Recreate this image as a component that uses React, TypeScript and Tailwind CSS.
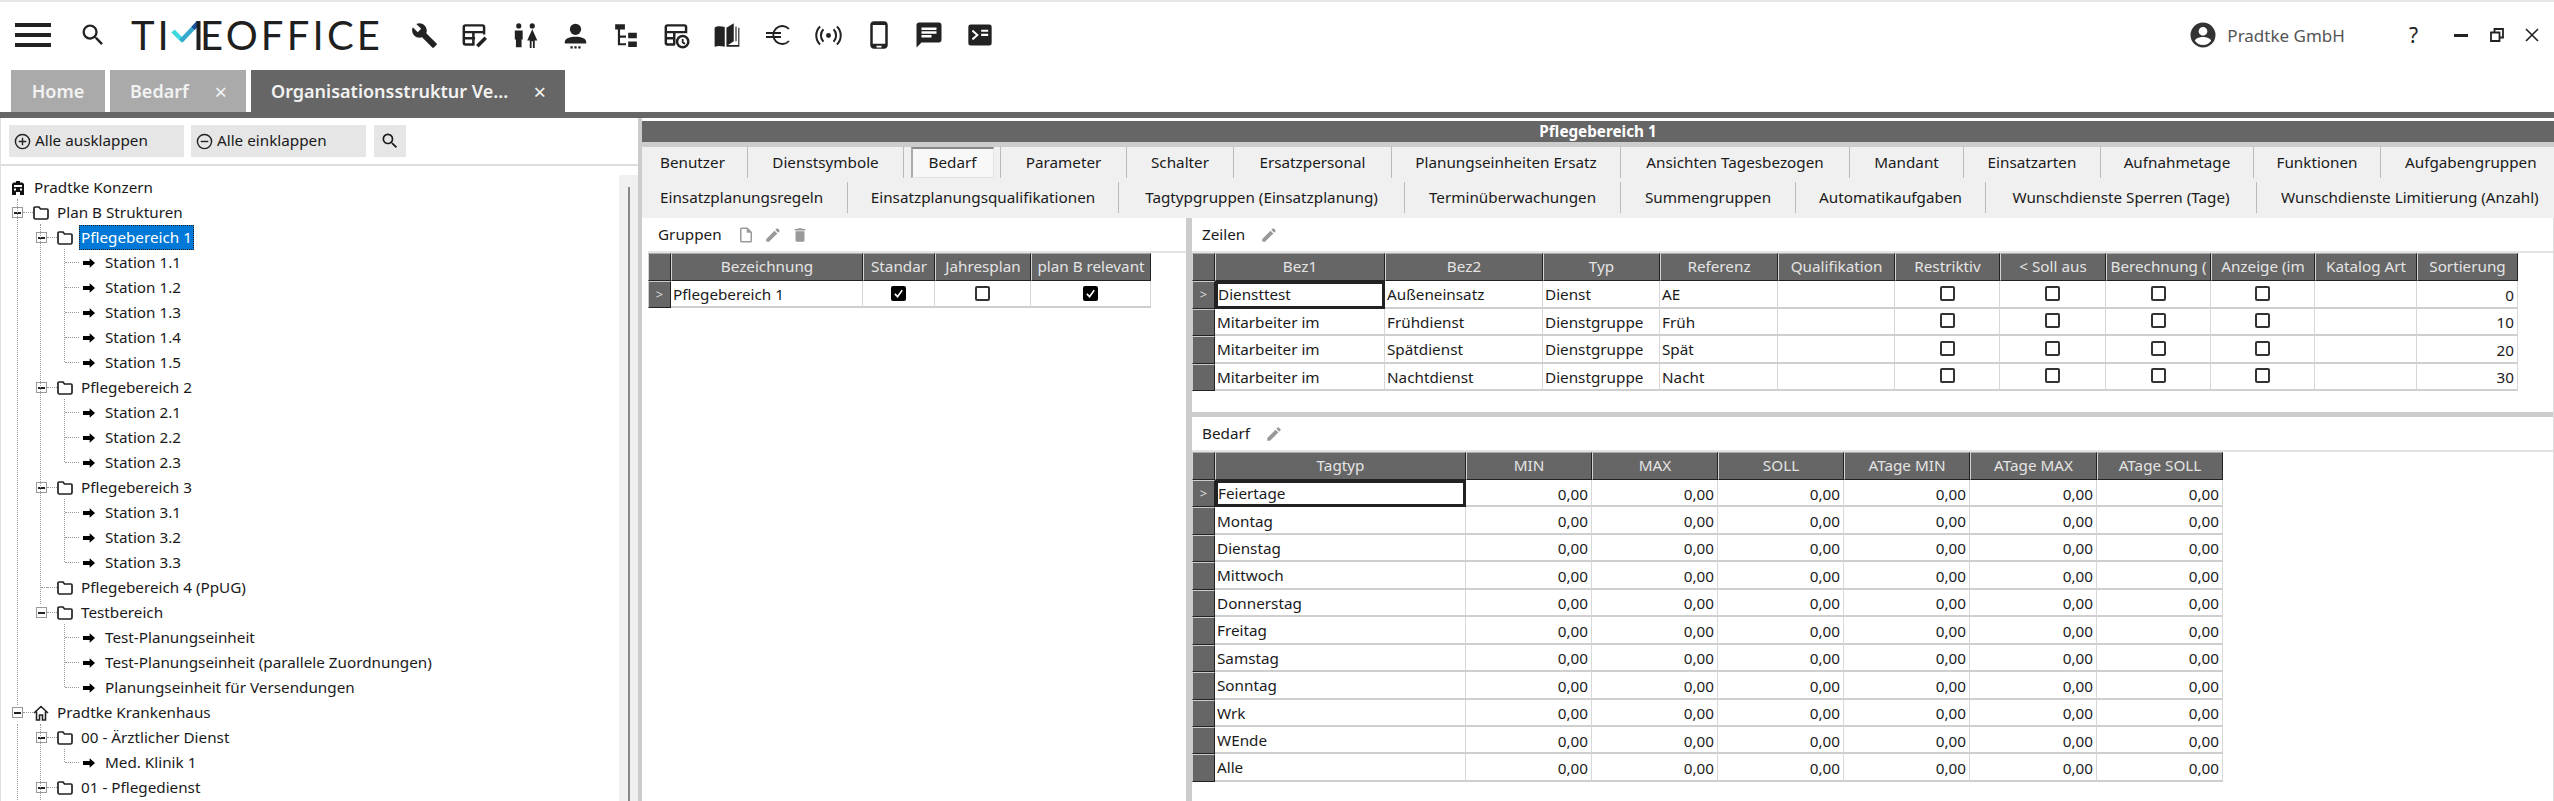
import React from 'react';

const font = "font-['Noto_Sans','Open_Sans',sans-serif]";

const Ic = ({ d, className = 'w-6 h-6', fill = 'currentColor' }: { d: string; className?: string; fill?: string }) => (
  <svg viewBox="0 0 24 24" className={className} fill={fill}>
    <path d={d} />
  </svg>
);

const P = {
  search: 'M15.5 14h-.79l-.28-.27A6.47 6.47 0 0 0 16 9.5 6.5 6.5 0 1 0 9.5 16c1.61 0 3.09-.59 4.23-1.57l.27.28v.79l5 4.99L20.49 19l-4.99-5zm-6 0C7.01 14 5 11.99 5 9.5S7.01 5 9.5 5 14 7.01 14 9.5 11.99 14 9.5 14z',
  wrench: 'M22.7 19l-9.1-9.1c.9-2.3.4-5-1.5-6.9-2-2-5-2.4-7.4-1.3L9 6 6 9 1.6 4.7C.4 7.1.9 10.1 2.9 12.1c1.9 1.9 4.6 2.4 6.9 1.5l9.1 9.1c.4.4 1 .4 1.4 0l2.3-2.3c.5-.4.5-1.1.1-1.4z',
  phone: 'M16 1H8C6.3 1 5 2.3 5 4v16c0 1.7 1.3 3 3 3h8c1.7 0 3-1.3 3-3V4c0-1.7-1.3-3-3-3zm1 18H7V4h10zM10 20.5h4V22h-4z',
  message: 'M20 2H4c-1.1 0-2 .9-2 2v18l4-4h14c1.1 0 2-.9 2-2V4c0-1.1-.9-2-2-2zM6 9h12v2H6zm8 5H6v-2h8zm4-6H6V6h12z',
  terminal: 'M20 3H4a2 2 0 0 0-2 2v14a2 2 0 0 0 2 2h16a2 2 0 0 0 2-2V5a2 2 0 0 0-2-2zM6 16.5 5 15l3.5-3L5 9l1-1.5 5 4.5zM13 11h6v1.800h-6zm0-3.500h6v1.800h-6z',
  book: 'M1 5c2-1.300 5-1.500 9-.500V22c-3.500-1-6.500-1-9 0zM11.500 5 18 1v16l-5 3.500h9V5h1v17H11.500zM19.500 4h1v13h-1z',
  avatar: 'M12 2a10 10 0 1 0 0 20 10 10 0 0 0 0-20zm0 3.500a3.500 3.500 0 1 1 0 7 3.500 3.500 0 0 1 0-7zM12 20a8 8 0 0 1-6.500-3.400C5.600 14.600 9.600 13.500 12 13.500s6.400 1.100 6.500 3.100A8 8 0 0 1 12 20z',
  newFile: 'M14 2H6a2 2 0 0 0-2 2v16a2 2 0 0 0 2 2h12a2 2 0 0 0 2-2V8zM18 20H6V4h7v5h5z',
  pencil: 'M3 17.250V21h3.750L17.810 9.940l-3.750-3.750zM20.710 7.040a1 1 0 0 0 0-1.410l-2.340-2.340a1 1 0 0 0-1.410 0l-1.830 1.830 3.750 3.750z',
  trash: 'M6 19a2 2 0 0 0 2 2h8a2 2 0 0 0 2-2V7H6zM19 4h-3.500l-1-1h-5l-1 1H5v2h14z',
  arrow: 'M13 5l8 7-8 7v-4H3V9h10z',
};

const Folder = () => (
  <svg viewBox="0 0 16 14" className="w-4 h-[14px] shrink-0 text-[#222]" fill="none" stroke="currentColor" strokeWidth="1.700">
    <path d="M1 3.500V11.500a1.500 1.500 0 0 0 1.500 1.500h11a1.500 1.500 0 0 0 1.500-1.500V4a1 1 0 0 0-1-1H7.500L6 1H2a1 1 0 0 0-1 1z" />
  </svg>
);

const Expander = () => (
  <span className="w-[11px] h-[11px] shrink-0 border border-[#999] bg-white flex items-center justify-center">
    <span className="w-[7px] h-[2px] bg-[#222]" />
  </span>
);

type Node = { label: string; depth: number; kind: 'root' | 'home' | 'folder' | 'leaf'; open?: boolean; selected?: boolean };

const tree: Node[] = [
  { label: 'Pradtke Konzern', depth: 0, kind: 'root' },
  { label: 'Plan B Strukturen', depth: 0, kind: 'folder', open: true },
  { label: 'Pflegebereich 1', depth: 1, kind: 'folder', open: true, selected: true },
  { label: 'Station 1.1', depth: 2, kind: 'leaf' },
  { label: 'Station 1.2', depth: 2, kind: 'leaf' },
  { label: 'Station 1.3', depth: 2, kind: 'leaf' },
  { label: 'Station 1.4', depth: 2, kind: 'leaf' },
  { label: 'Station 1.5', depth: 2, kind: 'leaf' },
  { label: 'Pflegebereich 2', depth: 1, kind: 'folder', open: true },
  { label: 'Station 2.1', depth: 2, kind: 'leaf' },
  { label: 'Station 2.2', depth: 2, kind: 'leaf' },
  { label: 'Station 2.3', depth: 2, kind: 'leaf' },
  { label: 'Pflegebereich 3', depth: 1, kind: 'folder', open: true },
  { label: 'Station 3.1', depth: 2, kind: 'leaf' },
  { label: 'Station 3.2', depth: 2, kind: 'leaf' },
  { label: 'Station 3.3', depth: 2, kind: 'leaf' },
  { label: 'Pflegebereich 4 (PpUG)', depth: 1, kind: 'folder' },
  { label: 'Testbereich', depth: 1, kind: 'folder', open: true },
  { label: 'Test-Planungseinheit', depth: 2, kind: 'leaf' },
  { label: 'Test-Planungseinheit (parallele Zuordnungen)', depth: 2, kind: 'leaf' },
  { label: 'Planungseinheit für Versendungen', depth: 2, kind: 'leaf' },
  { label: 'Pradtke Krankenhaus', depth: 0, kind: 'home', open: true },
  { label: '00 - Ärztlicher Dienst', depth: 1, kind: 'folder', open: true },
  { label: 'Med. Klinik 1', depth: 2, kind: 'leaf' },
  { label: '01 - Pflegedienst', depth: 1, kind: 'folder', open: true },
];

const TreeRow = ({ n }: { n: Node }) => {
  if (n.kind === 'root') {
    return (
      <div className="h-[25px] flex items-center pl-[11px] gap-[10px]">
        <svg viewBox="0 0 12 14" className="w-3 h-[14px] shrink-0 text-[#111]" fill="currentColor">
          <path d="M4 0h4v1.500h2.500L12 3v11H8v-3H4v3H0V3l1.500-1.500H4zM2 4v2h8V4zm0 3.500v2h2v-2zm6 0v2h2v-2z" fillRule="evenodd" />
        </svg>
        <span>{n.label}</span>
      </div>
    );
  }
  const indent = n.depth === 0 ? 'pl-[11px]' : n.depth === 1 ? 'pl-[35px]' : 'pl-[64px]';
  if (n.kind === 'leaf') {
    return (
      <div className={`h-[25px] flex items-center ${indent}`}>
        <span className="w-[14px] border-t border-dotted border-[#999] shrink-0" />
        <span className="ml-[2px] shrink-0"><Ic d={P.arrow} className="w-[16px] h-[16px] text-black" /></span>
        <span className="ml-[8px]">{n.label}</span>
      </div>
    );
  }
  return (
    <div className={`h-[25px] flex items-center ${indent}`}>
      {n.open ? <Expander /> : <span className="w-[6px] shrink-0 border-t border-dotted border-[#999] ml-[5px]" />}
      <span className="w-[10px] border-t border-dotted border-[#999] shrink-0" />
      {n.kind === 'home' ? (
        <svg viewBox="0 0 16 16" className="w-4 h-4 shrink-0 text-[#222]" fill="none" stroke="currentColor" strokeWidth="1.600">
          <path d="M1 8l7-6.500L15 8M3.500 6.500V15H6.500V10h3v5h3V6.500" />
        </svg>
      ) : (
        <Folder />
      )}
      <span className={n.selected ? 'ml-[6px] px-[2px] h-[25px] flex items-center bg-[#0078d7] text-white outline-1 -outline-offset-1 outline-dotted outline-[#222]' : 'ml-[8px]'}>{n.label}</span>
    </div>
  );
};

const Vline = ({ className }: { className: string }) => <div className={`absolute w-0 border-l border-dotted border-[#999] ${className}`} />;

// tabs of the two rows: label + width
const tabsA = [
  ['Benutzer', 88], ['Dienstsymbole', 156], ['Bedarf', 97], ['Parameter', 126], ['Schalter', 107], ['Ersatzpersonal', 158],
  ['Planungseinheiten Ersatz', 229], ['Ansichten Tagesbezogen', 229], ['Mandant', 114], ['Einsatzarten', 137], ['Aufnahmetage', 153], ['Funktionen', 127], ['Aufgabengruppen', 173],
] as [string, number][];
const tabsB = [
  ['Einsatzplanungsregeln', 188], ['Einsatzplanungsqualifikationen', 271], ['Tagtypgruppen (Einsatzplanung)', 286], ['Terminüberwachungen', 216], ['Summengruppen', 175],
  ['Automatikaufgaben', 190], ['Wunschdienste Sperren (Tage)', 271], ['Wunschdienste Limitierung (Anzahl)', 297],
] as [string, number][];

const Check = ({ on }: { on?: boolean }) =>
  on ? (
    <span className="w-[15px] h-[15px] rounded-[2px] bg-black flex items-center justify-center -mt-[3px]">
      <svg viewBox="0 0 12 12" className="w-[11px] h-[11px]" fill="none" stroke="white" strokeWidth="1.800"><path d="M2 6.500l3 3 5-7" /></svg>
    </span>
  ) : (
    <span className="w-[15px] h-[15px] rounded-[2px] border-2 border-[#333] bg-white -mt-[3px]" />
  );

const HeadCell = ({ children, w }: { children?: React.ReactNode; w: number }) => (
  <div style={{ width: w }} className="shrink-0 h-[28px] bg-[#666] text-[#e4e4e4] border border-[#d4d4d4] border-r-[#222] border-b-[#222] border-t-[#aaa] flex items-center justify-center overflow-hidden whitespace-nowrap">
    {children}
  </div>
);

const RowHead = ({ mark }: { mark?: boolean }) => (
  <div className="w-[23px] shrink-0 h-full bg-[#666] text-[#ddd] border border-[#ccc] border-r-[#222] border-b-[#222] flex items-center justify-center text-[13px]">
    {mark ? '>' : ''}
  </div>
);

type Col = { w: number; right?: boolean; check?: boolean };

const Grid = ({ cols, heads, rows, cursor, rowH }: { cols: Col[]; heads: string[]; rows: (string | boolean)[][]; cursor?: boolean; rowH: string }) => (
  <div className="flex flex-col items-start">
    <div className="flex">
      <HeadCell w={23} />
      {heads.map((h, i) => <HeadCell key={i} w={cols[i].w}>{h}</HeadCell>)}
    </div>
    {rows.map((r, ri) => (
      <div key={ri} className={`flex ${rowH} box-border`}>
        <RowHead mark={ri === 0} />
        {r.map((c, ci) => {
          const cur = cursor && ri === 0 && ci === 0;
          return (
            <div
              key={ci}
              style={{ width: cols[ci].w }}
              className={`shrink-0 h-full box-border flex items-center overflow-hidden whitespace-nowrap text-[#1a1a1a] ${cols[ci].check ? 'justify-center pt-[2px]' : cols[ci].right ? 'justify-end pr-[3px] pt-[3px]' : 'pl-[2px] pt-[2px]'} ${cur ? 'border-[3px] border-[#222] !pl-0 !pt-0' : 'border-r border-b-2 border-r-[#d8d8d8] border-b-[#cfcfcf]'}`}
            >
              {typeof c === 'boolean' ? <Check on={c} /> : c}
            </div>
          );
        })}
      </div>
    ))}
  </div>
);

const zeilenCols: Col[] = [{ w: 170 }, { w: 158 }, { w: 117 }, { w: 118 }, { w: 117 }, { w: 105, check: true }, { w: 106, check: true }, { w: 105, check: true }, { w: 104, check: true }, { w: 102 }, { w: 101, right: true }];
const bedarfCols: Col[] = [{ w: 251 }, ...[126, 126, 126, 126, 127, 126].map((w) => ({ w, right: true }))];
const tage = ['Feiertage', 'Montag', 'Dienstag', 'Mittwoch', 'Donnerstag', 'Freitag', 'Samstag', 'Sonntag', 'Wrk', 'WEnde', 'Alle'];

const PanelHead = ({ title, icons }: { title: string; icons: string[] }) => (
  <div className="h-[35px] flex items-center pl-[10px] border-b-2 border-[#e4e4e4] shrink-0">
    <span className="text-[#1a1a1a]">{title}</span>
    <span className="flex items-center gap-[9px] ml-[15px] text-[#999]">
      {icons.map((d, i) => <Ic key={i} d={d} className="w-[18px] h-[18px]" />)}
    </span>
  </div>
);

const Slot = ({ children }: { children: React.ReactNode }) => <div className="w-[50.500px] h-[30px] shrink-0 flex items-center justify-center">{children}</div>;

export default function App() {
  return (
    <div className={`${font} w-[2554px] h-[801px] overflow-hidden bg-white text-[15.25px] leading-none text-[#1a1a1a] flex flex-col`}>
      {/* header */}
      <header className="h-[70px] shrink-0 border-t-2 border-[#e6e6e6] flex items-start">
        <div className="flex items-center h-[66px] w-full text-[#222]">
          <div className="ml-[15px] w-[36px] flex flex-col gap-[6px]">
            <span className="h-[4px] bg-[#222]" /><span className="h-[4px] bg-[#222]" /><span className="h-[4px] bg-[#222]" />
          </div>
          <Ic d={P.search} className="ml-[28px] w-7 h-7" />
          {/* logo: the M is drawn, its left stroke is shared with the I */}
          <div className="ml-[24px] relative w-[250px] h-[44px] flex items-center font-['Lato',sans-serif] text-[40px] text-[#1f1f1f] whitespace-nowrap">
            <span className="tracking-[3px]">TI</span>
            <span className="text-transparent tracking-[-9px]">M</span>
            <span className="tracking-[3.200px]">EOFFICE</span>
            <svg viewBox="0 0 32 32" className="absolute left-[40px] top-[6px] w-[32px] h-[32px]" fill="none">
              <path d="M2 12l10 10" stroke="#3fd8e0" strokeWidth="4.500" />
              <path d="M10 22L27 4" stroke="#35a8d0" strokeWidth="4.500" />
              <path d="M22 9.500L27.500 3.500" stroke="#1d4f9a" strokeWidth="4.500" />
              <path d="M27.500 2V31" stroke="#1f1f1f" strokeWidth="4" />
            </svg>
          </div>
          <div className="flex items-center text-[#222] ml-[18px]">
            <Slot><Ic d={P.wrench} className="w-[27px] h-[27px]" /></Slot>
            <Slot>
              <svg viewBox="0 0 24 24" className="w-[27px] h-[27px]" fill="none" stroke="currentColor" strokeWidth="2.200">
                <path d="M12 20H4a1.500 1.500 0 0 1-1.500-1.500v-14A1.500 1.500 0 0 1 4 3h15a1.500 1.500 0 0 1 1.500 1.500V11M2.500 9h18M2.500 14.500h10M11 9v11" />
                <path d="M14.500 21.500l7.500-7.500" strokeWidth="3.200" />
              </svg>
            </Slot>
            <Slot>
              <svg viewBox="0 0 24 24" className="w-[27px] h-[27px]" fill="currentColor">
                <circle cx="6" cy="3.500" r="2.300" /><circle cx="18" cy="3.500" r="2.300" />
                <path d="M2.500 7.500h7v8H8.500v7h-5v-7h-1zM18 6.500l4.500 10h-2.300V23h-1.600v-6h-1.200v6h-1.600v-6.500h-2.300z" />
              </svg>
            </Slot>
            <Slot>
              <svg viewBox="0 0 24 24" className="w-[27px] h-[27px]" fill="currentColor">
                <circle cx="12" cy="6.500" r="5" />
                <path d="M2.500 19v-1.500c0-3 4.500-4.500 9.500-4.500s9.500 1.500 9.500 4.500V19z" />
                <path d="M7.500 21.500h2V23.500h-2zm3.500 0h2V23.500h-2zm3.500 0h2V23.500h-2z" />
              </svg>
            </Slot>
            <Slot>
              <svg viewBox="0 0 24 24" className="w-[26px] h-[26px]" fill="currentColor">
                <path d="M2 2h9v5H6.500v5.500H12v2H6.500v5H12v2H4.500V7H2zM14 10h8v5h-8zM14 18h8v5h-8z" />
              </svg>
            </Slot>
            <Slot>
              <svg viewBox="0 0 24 24" className="w-[27px] h-[27px]" fill="none" stroke="currentColor" strokeWidth="2.200">
                <path d="M10.500 20H4a1.500 1.500 0 0 1-1.500-1.500v-14A1.500 1.500 0 0 1 4 3h15a1.500 1.500 0 0 1 1.500 1.500V10M2.500 9h18M2.500 14.500h8M10 9v11" />
                <circle cx="17.500" cy="17.500" r="5" /><path d="M17.500 15v3l2 1.500" strokeWidth="1.600" />
              </svg>
            </Slot>
            <Slot><Ic d={P.book} className="w-[30px] h-[27px]" /></Slot>
            <Slot>
              <svg viewBox="0 0 26 20" className="w-[26px] h-[20px]" fill="none" stroke="currentColor" strokeWidth="1.800">
                <path d="M24 4A9 9 0 1 0 24 16M1 8h15M1 12h15" />
              </svg>
            </Slot>
            <Slot>
              <svg viewBox="0 0 24 24" className="w-[27px] h-[27px]" fill="currentColor">
                <circle cx="12" cy="12" r="2.200" />
                <path d="M7.500 6.500c-3 3-3 8 0 11M16.500 6.500c3 3 3 8 0 11M4.500 4c-4.500 4.500-4.500 11.500 0 16M19.500 4c4.500 4.500 4.500 11.500 0 16" fill="none" stroke="currentColor" strokeWidth="1.800" />
              </svg>
            </Slot>
            <Slot><Ic d={P.phone} className="w-[30px] h-[30px]" /></Slot>
            <Slot><Ic d={P.message} className="w-[32px] h-[30px]" /></Slot>
            <Slot><Ic d={P.terminal} className="w-[28px] h-[28px]" /></Slot>
          </div>
          <div className="ml-auto flex items-center text-[#555]">
            <Ic d={P.avatar} className="w-[30px] h-[30px] text-[#333]" />
            <span className="ml-[9px] text-[17px]">Pradtke GmbH</span>
            <span className="ml-[64px] text-[21px] text-[#222]">?</span>
            <span className="ml-[36px] w-[14px] h-[3px] bg-[#222]" />
            <svg viewBox="0 0 14 14" className="ml-[22px] w-[14px] h-[14px] text-[#222]" fill="none" stroke="currentColor" strokeWidth="1.800"><path d="M1 4.500h8.500V13H1zM4.500 4.500V1H13v8.500H9.500" /></svg>
            <svg viewBox="0 0 14 14" className="ml-[21px] mr-[15px] w-[14px] h-[14px] text-[#222]" fill="none" stroke="currentColor" strokeWidth="1.600"><path d="M1 1l12 12M13 1L1 13" /></svg>
          </div>
        </div>
      </header>

      {/* document tabs */}
      <div className="h-[42px] shrink-0 flex items-end gap-[5px] pl-[11px] font-semibold text-[18px] text-[#f2f2f2]">
        <div className="w-[94px] h-full bg-[#aaa] flex items-center justify-center">Home</div>
        <div className="w-[136px] h-full bg-[#aaa] flex items-center pl-[20px]">
          <span>Bedarf</span><span className="ml-auto mr-[19px] text-[22px] font-normal">×</span>
        </div>
        <div className="w-[314px] h-full bg-[#666] flex items-center pl-[20px]">
          <span className="whitespace-nowrap">Organisationsstruktur Ve...</span><span className="ml-auto mr-[19px] text-[22px] font-normal">×</span>
        </div>
      </div>
      <div className="h-[6px] shrink-0 bg-[#666]" />

      {/* body */}
      <div className="flex-1 min-h-0 flex">
        <aside className="w-[638px] shrink-0 flex flex-col border-l border-[#e0e0e0]">
          <div className="h-[48px] shrink-0 border-b-2 border-[#ddd] flex items-center pl-[8px] gap-[7px]">
            <button className="w-[175px] h-[32px] bg-[#e6e6e6] flex items-center pl-[5px] gap-[4px]">
              <svg viewBox="0 0 18 18" className="w-[17px] h-[17px]" fill="none" stroke="#222" strokeWidth="1.500"><circle cx="9" cy="9" r="7.500" /><path d="M5 9h8M9 5v8" /></svg>
              Alle ausklappen
            </button>
            <button className="w-[175px] h-[32px] bg-[#e6e6e6] flex items-center pl-[5px] gap-[4px]">
              <svg viewBox="0 0 18 18" className="w-[17px] h-[17px]" fill="none" stroke="#222" strokeWidth="1.500"><circle cx="9" cy="9" r="7.500" /><path d="M5 9h8" /></svg>
              Alle einklappen
            </button>
            <button className="w-[32px] h-[32px] ml-px bg-[#e6e6e6] flex items-center justify-center"><Ic d={P.search} className="w-[20px] h-[20px]" /></button>
          </div>
          <div className="relative flex-1 min-h-0 overflow-hidden pt-[9px]">
            <Vline className="left-[16px] top-[33px] h-[506px]" />
            <Vline className="left-[16px] top-[558px] h-[80px]" />
            <Vline className="left-[39px] top-[58px] h-[380px]" />
            <Vline className="left-[39px] top-[558px] h-[80px]" />
            <Vline className="left-[63px] top-[83px] h-[113px]" />
            <Vline className="left-[63px] top-[233px] h-[63px]" />
            <Vline className="left-[63px] top-[333px] h-[63px]" />
            <Vline className="left-[63px] top-[458px] h-[63px]" />
            <Vline className="left-[63px] top-[583px] h-[13px]" />
            {tree.map((n, i) => <TreeRow key={i} n={n} />)}
            <div className="absolute right-0 top-[9px] bottom-0 w-[19px] bg-[#f0f0f0]">
              <div className="absolute left-[9px] top-[12px] bottom-0 w-[2px] bg-[#888]" />
            </div>
          </div>
        </aside>
        <div className="w-[4px] shrink-0 bg-[#ccc]" />

        <main className="flex-1 min-w-0 flex flex-col pt-[3px]">
          <div className="h-[21px] shrink-0 bg-[#666] text-white font-bold flex items-center justify-center">Pflegebereich 1</div>
          <div className="h-[5px] shrink-0 bg-[#ccc]" />
          <div className="h-[71px] shrink-0 bg-[#f0f0f0] flex flex-col pl-[18px]">
            {[tabsA, tabsB].map((row, ri) => (
              <div key={ri} className={`flex h-[31px] ${ri === 1 ? 'mt-[4px]' : ''}`}>
                {row.map(([t, w], i) => (
                  <div key={t} style={{ width: w }} className={`shrink-0 h-full flex items-center whitespace-nowrap ${i === row.length - 1 ? 'pl-[24px]' : 'border-r border-[#bbb]'} ${i === 0 ? 'justify-start' : i === row.length - 1 ? '' : 'justify-center'}`}>
                    {t === 'Bedarf' ? (
                      <span className="w-[83px] h-[31px] bg-[#f8f8f8] border border-[#e2e2e2] border-t-2 border-l-2 border-t-[#888] border-l-[#aaa] flex items-center justify-center">{t}</span>
                    ) : t}
                  </div>
                ))}
              </div>
            ))}
          </div>

          <div className="flex-1 min-h-0 flex">
            <section className="w-[544px] shrink-0 pl-[6px] flex flex-col">
              <PanelHead title="Gruppen" icons={[P.newFile, P.pencil, P.trash]} />
              <Grid
                cols={[{ w: 192 }, { w: 72, check: true }, { w: 96, check: true }, { w: 120, check: true }]}
                heads={['Bezeichnung', 'Standar', 'Jahresplan', 'plan B relevant']}
                rows={[['Pflegebereich 1', true, false, true]]}
                rowH="h-[27px]"
              />
            </section>
            <div className="w-[6px] shrink-0 bg-[#ccc]" />
            <section className="flex-1 min-w-0 flex flex-col border-r border-[#ddd]">
              <div className="h-[194px] shrink-0 flex flex-col">
                <PanelHead title="Zeilen" icons={[P.pencil]} />
                <Grid
                  cols={zeilenCols}
                  heads={['Bez1', 'Bez2', 'Typ', 'Referenz', 'Qualifikation', 'Restriktiv', '< Soll aus', 'Berechnung (', 'Anzeige (im', 'Katalog Art', 'Sortierung']}
                  rows={[
                    ['Diensttest', 'Außeneinsatz', 'Dienst', 'AE', '', false, false, false, false, '', '0'],
                    ['Mitarbeiter im', 'Frühdienst', 'Dienstgruppe', 'Früh', '', false, false, false, false, '', '10'],
                    ['Mitarbeiter im', 'Spätdienst', 'Dienstgruppe', 'Spät', '', false, false, false, false, '', '20'],
                    ['Mitarbeiter im', 'Nachtdienst', 'Dienstgruppe', 'Nacht', '', false, false, false, false, '', '30'],
                  ]}
                  cursor
                  rowH="h-[27.500px]"
                />
              </div>
              <div className="h-[5px] shrink-0 bg-[#ccc]" />
              <PanelHead title="Bedarf" icons={[P.pencil]} />
              <Grid
                cols={bedarfCols}
                heads={['Tagtyp', 'MIN', 'MAX', 'SOLL', 'ATage MIN', 'ATage MAX', 'ATage SOLL']}
                rows={tage.map((t) => [t, '0,00', '0,00', '0,00', '0,00', '0,00', '0,00'])}
                cursor
                rowH="h-[27.450px]"
              />
            </section>
          </div>
        </main>
      </div>
    </div>
  );
}
